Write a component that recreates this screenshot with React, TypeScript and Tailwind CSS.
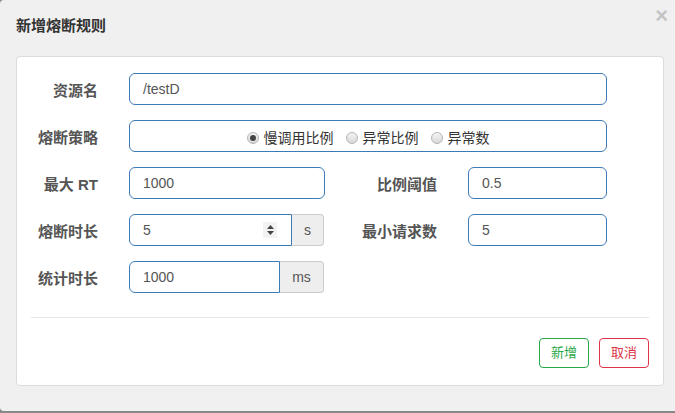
import React from 'react';

const FONT = { fontFamily: '"Liberation Sans", "Noto Sans CJK SC", sans-serif' };

const Label = ({ text, width }: { text: string; width: string }) => (
  <div className={`${width} h-[32px] shrink-0 translate-y-[2px] text-right text-[15px] font-bold text-[#555] leading-[32px]`}>{text}</div>
);

const Radio = ({ label, checked }: { label: string; checked?: boolean }) => (
  <label className="flex items-center gap-[5px]">
    <span className="flex h-[12px] w-[12px] items-center justify-center rounded-full border border-[#b5b5b5] bg-gradient-to-b from-[#f4f4f4] to-[#d8d8d8]">
      {checked && <span className="h-[6px] w-[6px] rounded-full bg-[#444]" />}
    </span>
    <span className="text-[14px] text-[#333]">{label}</span>
  </label>
);

const App: React.FC = () => {
  return (
    <div className="relative h-[413px] w-[675px] overflow-hidden bg-[#888]" style={FONT}>
      <div className="h-[411px] w-[690px] rounded-[4px] bg-[#f0f0f0]">
        {/* Header */}
        <div className="flex h-[51px] items-center pl-4 pt-[2px]">
          <h4 className="text-[15px] font-bold text-[#333]">新增熔断规则</h4>
        </div>
        <button className="absolute right-[7px] top-[5px] text-[22px] font-bold leading-none text-[#c4c4c4]">×</button>

        {/* Body panel */}
        <div className="ml-4 mt-[5px] w-[648px] rounded-[4px] border border-[#dcdcdc] bg-white pb-[17px] pt-[16px]">
          <div className="flex flex-col gap-[15px]">
            <div className="flex items-center">
              <Label text="资源名" width="w-[81px]" />
              <div className="ml-[31px] flex h-[32px] w-[478px] items-center rounded-[6px] border border-[#3d7bb8] px-[13px] text-[14px] text-[#555]">/testD</div>
            </div>

            <div className="flex items-center">
              <Label text="熔断策略" width="w-[81px]" />
              <div className="ml-[31px] flex h-[32px] w-[478px] items-center justify-center gap-[12px] rounded-[6px] border border-[#3d7bb8] pt-[4px]">
                <Radio label="慢调用比例" checked />
                <Radio label="异常比例" />
                <Radio label="异常数" />
              </div>
            </div>

            <div className="flex items-center">
              <Label text="最大 RT" width="w-[81px]" />
              <div className="ml-[31px] flex h-[32px] w-[196px] items-center rounded-[6px] border border-[#3d7bb8] px-[13px] text-[14px] text-[#555]">1000</div>
              <Label text="比例阈值" width="w-[112px]" />
              <div className="ml-[31px] flex h-[32px] w-[139px] items-center rounded-[6px] border border-[#3d7bb8] px-[13px] text-[14px] text-[#555]">0.5</div>
            </div>

            <div className="flex items-center">
              <Label text="熔断时长" width="w-[81px]" />
              <div className="ml-[31px] flex h-[32px] w-[195px]">
                <div className="flex w-[163px] items-center justify-between rounded-l-[6px] border border-[#3d7bb8] pl-[13px] pr-[14px] text-[14px] text-[#555]">
                  <span>5</span>
                  <span className="flex h-[16px] w-[14px] flex-col items-center justify-center gap-[2px] bg-[#f2f2f2]">
                    <svg width="7" height="4" viewBox="0 0 7 4"><path d="M0 4 L3.5 0 L7 4 Z" fill="#444" /></svg>
                    <svg width="7" height="4" viewBox="0 0 7 4"><path d="M0 0 L3.5 4 L7 0 Z" fill="#444" /></svg>
                  </span>
                </div>
                <div className="flex w-[32px] items-center justify-center rounded-r-[4px] border border-l-0 border-[#ccc] bg-[#eee] text-[14px] text-[#555]">s</div>
              </div>
              <Label text="最小请求数" width="w-[113px]" />
              <div className="ml-[31px] flex h-[32px] w-[139px] items-center rounded-[6px] border border-[#3d7bb8] px-[13px] text-[14px] text-[#555]">5</div>
            </div>

            <div className="flex items-center">
              <Label text="统计时长" width="w-[81px]" />
              <div className="ml-[31px] flex h-[32px] w-[195px]">
                <div className="flex w-[151px] items-center rounded-l-[6px] border border-[#3d7bb8] px-[13px] text-[14px] text-[#555]">1000</div>
                <div className="flex w-[44px] items-center justify-center rounded-r-[4px] border border-l-0 border-[#ccc] bg-[#eee] text-[14px] text-[#555]">ms</div>
              </div>
            </div>
          </div>

          <div className="mx-[14px] mt-[24px] h-px bg-[#e5e5e5]" />

          <div className="mt-[20px] flex justify-end gap-[10px] pr-[14px]">
            <button className="h-[30px] w-[50px] rounded-[4px] border border-[#28a745] text-[13px] text-[#28a745]">新增</button>
            <button className="h-[30px] w-[50px] rounded-[4px] border border-[#dc3545] text-[13px] text-[#dc3545]">取消</button>
          </div>
        </div>
      </div>
    </div>
  );
};

export default App;
